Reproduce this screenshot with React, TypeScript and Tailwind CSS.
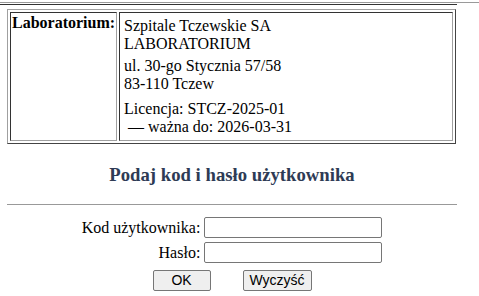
export default function App() {
  return (
    <div className="min-h-[296px] w-[479px] bg-white text-black font-['Liberation_Serif',serif] text-[16px]">
      <div className="h-[2px]" />
      <div className="h-px bg-[#9a9a9a]" />
      <div className="h-px" />
      <div className="h-px w-[457px] bg-[#333]" />
      <div className="h-[4px]" />
      <div className="ml-[7px] w-[450px]">
        <div className="flex w-[449px] h-[135px] gap-[2px] p-[2px] border border-t-[#a0a0a0] border-l-[#a0a0a0] border-r-[#444] border-b-[#444]">
          <div className="w-[107px] h-[129px] border border-t-[#333] border-l-[#333] border-r-[#a0a0a0] border-b-[#a0a0a0] p-px font-bold leading-[18px]">
            Laboratorium:
          </div>
          <div className="flex-1 h-[129px] border border-t-[#333] border-l-[#333] border-r-[#a0a0a0] border-b-[#a0a0a0] p-[4px] leading-[17.5px]">
            <div>Szpitale Tczewskie SA</div>
            <div>LABORATORIUM</div>
            <div className="mt-[5px]">ul. 30-go Stycznia 57/58</div>
            <div>83-110 Tczew</div>
            <div className="mt-[8px]">Licencja: STCZ-2025-01</div>
            <div>&nbsp;— ważna do: 2026-03-31</div>
          </div>
        </div>
        <h3 className="mt-[20px] text-center text-[18.72px] leading-[22px] font-bold text-[#2e3b55]">
          Podaj kod i hasło użytkownika
        </h3>
        <div className="mt-[18px] h-px w-[450px] bg-[#999]" />
        <div className="mt-[12px] mx-auto w-fit grid grid-cols-[auto_178px] gap-x-[4px] gap-y-[4px] items-center">
          <label className="text-right leading-[21px]">Kod użytkownika:</label>
          <input type="text" className="h-[21px] w-[178px] border border-[#767676] rounded-[2px] bg-white" />
          <label className="text-right leading-[21px]">Hasło:</label>
          <input type="password" className="h-[21px] w-[178px] border border-[#767676] rounded-[2px] bg-white" />
        </div>
        <div className="mt-[7px] flex justify-center gap-[32px] font-['Liberation_Sans',sans-serif] text-[14px]">
          <button className="w-[58px] h-[21px] bg-[#efefef] border border-[#767676] rounded-[2px] leading-[19px]">OK</button>
          <button className="w-[69px] h-[21px] bg-[#efefef] border border-[#767676] rounded-[2px] leading-[19px]">Wyczyść</button>
        </div>
      </div>
    </div>
  );
}
